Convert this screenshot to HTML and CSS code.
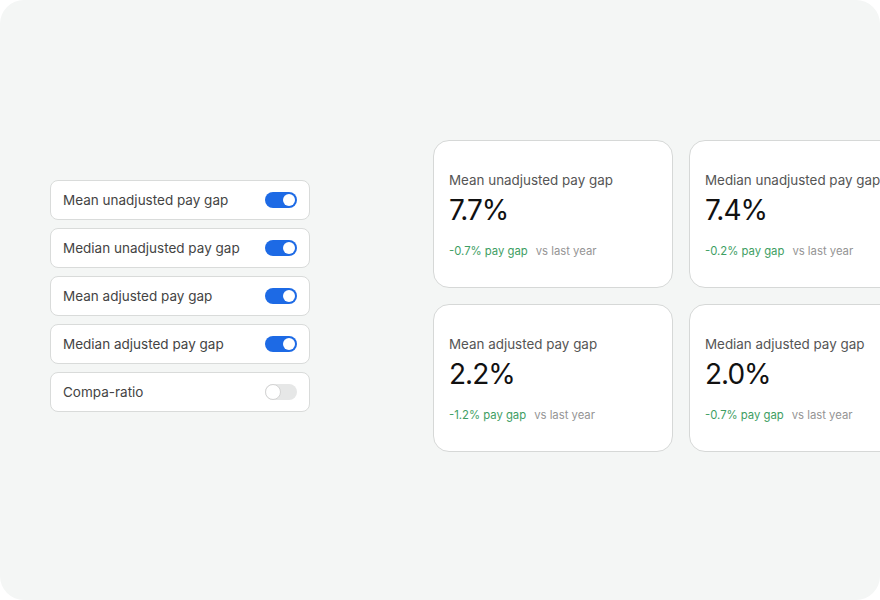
FILE: index.html
```html
<!DOCTYPE html>
<html lang="en">
<head>
<meta charset="utf-8">
<title>Pay gap metrics</title>
<link rel="stylesheet" href="styles.css">
</head>
<body>
<div class="frame">
  <ul class="toggles">
    <li class="toggle-item"><span class="label">Mean unadjusted pay gap</span><span class="switch on"><span class="knob"></span></span></li>
    <li class="toggle-item"><span class="label">Median unadjusted pay gap</span><span class="switch on"><span class="knob"></span></span></li>
    <li class="toggle-item"><span class="label">Mean adjusted pay gap</span><span class="switch on"><span class="knob"></span></span></li>
    <li class="toggle-item"><span class="label">Median adjusted pay gap</span><span class="switch on"><span class="knob"></span></span></li>
    <li class="toggle-item"><span class="label">Compa-ratio</span><span class="switch off"><span class="knob"></span></span></li>
  </ul>
  <div class="cards">
    <div class="card">
      <div class="card-title">Mean unadjusted pay gap</div>
      <div class="card-value">7.7%</div>
      <div class="card-foot"><span class="delta">-0.7% pay gap</span><span class="period">vs last year</span></div>
    </div>
    <div class="card">
      <div class="card-title">Median unadjusted pay gap</div>
      <div class="card-value">7.4%</div>
      <div class="card-foot"><span class="delta">-0.2% pay gap</span><span class="period">vs last year</span></div>
    </div>
    <div class="card">
      <div class="card-title">Mean adjusted pay gap</div>
      <div class="card-value">2.2%</div>
      <div class="card-foot"><span class="delta">-1.2% pay gap</span><span class="period">vs last year</span></div>
    </div>
    <div class="card">
      <div class="card-title">Median adjusted pay gap</div>
      <div class="card-value">2.0%</div>
      <div class="card-foot"><span class="delta">-0.7% pay gap</span><span class="period">vs last year</span></div>
    </div>
  </div>
</div>
</body>
</html>
```
FILE: styles.css
```css
* { box-sizing: border-box; }
html, body { margin: 0; padding: 0; background: #ffffff; }
body { font-family: Inter, "Noto Sans", "Liberation Sans", sans-serif; }

.frame {
  width: 880px;
  height: 600px;
  border-radius: 24px;
  background: #f4f6f5;
  overflow: hidden;
  display: flex;
  align-items: center;
  gap: 123px;
  padding: 0 0 8px 50px;
}

.toggles {
  list-style: none;
  margin: 0;
  padding: 0;
  width: 260px;
  flex-shrink: 0;
  display: flex;
  flex-direction: column;
  gap: 8px;
}

.toggle-item {
  height: 40px;
  background: #ffffff;
  border: 1px solid #d9dbda;
  border-radius: 8px;
  display: flex;
  align-items: center;
  justify-content: space-between;
  padding: 0 12px 0 12px;
}

.label {
  font-size: 13.5px;
  color: #444444;
  font-weight: 400;
}

.switch {
  width: 32px;
  height: 16px;
  border-radius: 8px;
  display: flex;
  align-items: center;
  padding: 0 2px;
}
.switch .knob {
  width: 12px;
  height: 12px;
  border-radius: 50%;
  background: #ffffff;
}
.switch.on { background: #1d6ae5; justify-content: flex-end; }
.switch.off { background: #e6e7e7; justify-content: flex-start; padding: 0; }
.switch.off .knob { width: 16px; height: 16px; border: 1px solid #d4d4d4; }

.cards {
  flex-shrink: 0;
  display: grid;
  grid-template-columns: 240px 240px;
  gap: 16px 16px;
}

.card {
  height: 148px;
  background: #ffffff;
  border: 1px solid #d6d8d7;
  border-radius: 16px;
  padding: 29px 16px 0 15px;
}

.card-title {
  font-size: 13.4px;
  line-height: 20px;
  color: #555555;
  white-space: nowrap;
}

.card-value {
  margin-top: 3px;
  font-size: 28px;
  line-height: 34px;
  color: #111111;
  letter-spacing: -1px;
}

.card-foot {
  margin-top: 16px;
  font-size: 11.3px;
  line-height: 16px;
  display: flex;
  gap: 8px;
}
.delta { color: #3e9e63; }
.period { color: #949494; }
```
